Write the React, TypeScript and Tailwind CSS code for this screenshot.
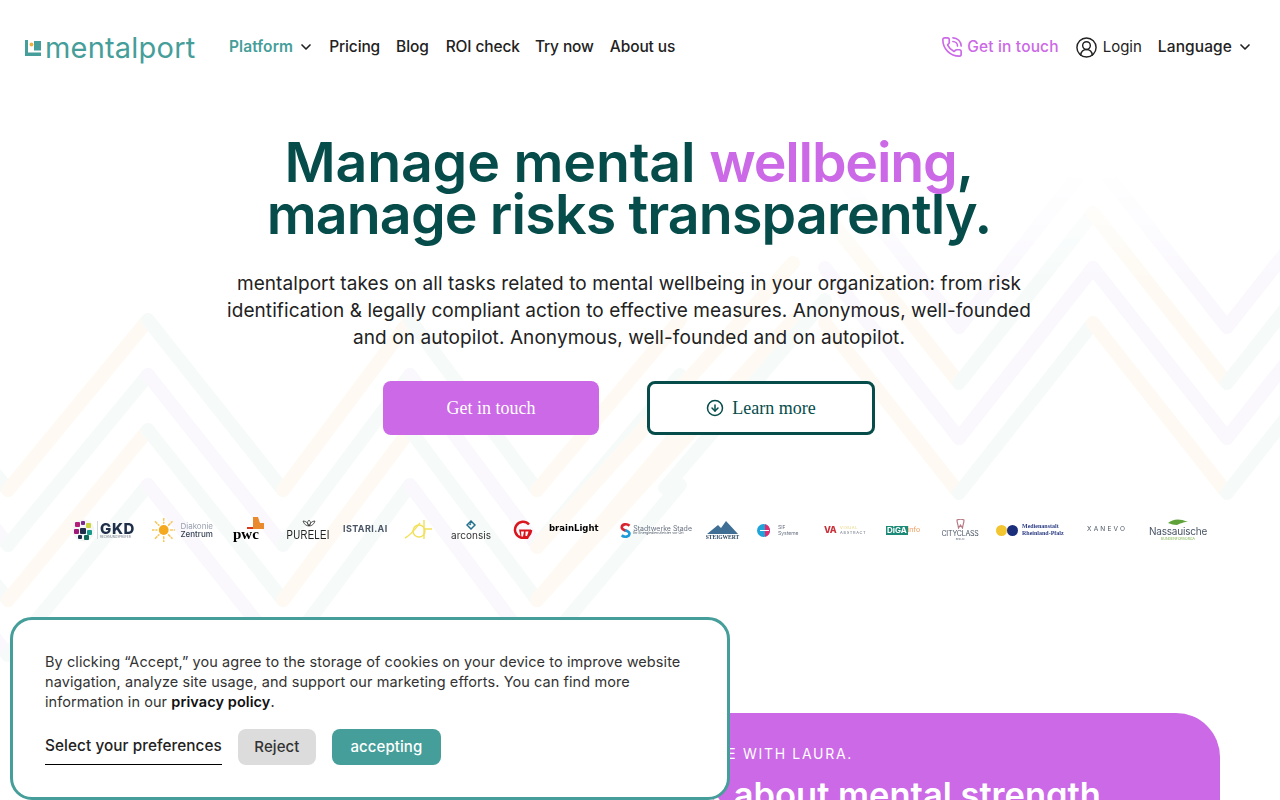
import { ChevronDown, CircleArrowDown, CircleUserRound, PhoneCall } from 'lucide-react'

const orange = '#fefaf3'
const teal = '#f6fbfa'
const purple = '#faf8fd'

// faint zigzag behind the hero: [x1, y1, x2, y2, colour]
const zigzag: [number, number, number, number, string][] = []
const addChevrons = (xs: number[], offsets: number[], left: string[], right: string[]) => {
  offsets.forEach((off, i) => {
    xs.forEach((x, j) => {
      if (j === xs.length - 1) return
      const down = j % 2 === 0
      const next = xs[j + 1]
      zigzag.push([x, down ? off : off + 170, next, down ? off + 170 : off, down ? right[i % right.length] : left[i % left.length]])
    })
  })
}
addChevrons([-126, 8, 148, 283, 410, 537, 680], [320, 375, 430, 485], [orange, teal], [teal, purple])
addChevrons([825, 959, 1093, 1227, 1361], [157, 213, 268, 323], [purple, teal], [purple, orange])
zigzag.push([537, 600, 793, 320, orange], [537, 547, 793, 263, orange], [665, 488, 825, 300, teal])

function Zigzag() {
  return (
    <svg className="absolute inset-0 h-[800px] w-[1280px] [mask-image:linear-gradient(to_bottom,transparent_170px,black_280px)]" viewBox="0 0 1280 800" fill="none">
      {zigzag.map(([x1, y1, x2, y2, c], i) => (
        <line key={i} x1={x1} y1={y1} x2={x2} y2={y2} stroke={c} strokeWidth="14" strokeLinecap="round" />
      ))}
    </svg>
  )
}

function LogoMark() {
  return (
    <svg className="mt-[2px]" width="16" height="16" viewBox="0 0 16 16">
      <path d="M0 0h3v12.5h13V16H0z" fill="#459e99" />
      <rect x="9" y="1" width="7" height="9.5" fill="#459e99" />
      <rect x="4.5" y="1" width="4.5" height="9.5" fill="#ffffff" />
      <circle cx="6.5" cy="4.5" r="1.9" fill="#f0b13c" />
    </svg>
  )
}

function Logos() {
  return (
    <div className="relative mt-[72px] flex h-[46px] items-center pl-[72px] blur-[0.3px]">
      {/* GKD */}
      <div className="flex w-[64px] shrink-0 items-center">
        <svg width="23" height="23" viewBox="0 0 23 23">
          <circle cx="11.5" cy="11.5" r="11" fill="#f4f6f5" />
          <rect x="3" y="3" width="5" height="5" rx="1" fill="#b51e78" />
          <rect x="9" y="2" width="4" height="4" rx="1" fill="#7a2a8c" />
          <rect x="14" y="4" width="5" height="5" rx="1" fill="#c9d63b" />
          <rect x="2" y="10" width="5" height="5" rx="1" fill="#a0197a" />
          <rect x="8" y="9" width="6" height="6" rx="1" fill="#1e2f4a" />
          <rect x="15" y="11" width="5" height="5" rx="1" fill="#169a8a" />
          <rect x="6" y="16" width="4" height="4" rx="1" fill="#1e2f4a" />
          <rect x="12" y="16" width="5" height="5" rx="1" fill="#0e6b58" />
        </svg>
        <div className="ml-[2px] border-l border-gray-300 pl-[2px] leading-none">
          <div className="text-[15px] font-extrabold tracking-[0.6px] text-[#1f2f4a]">GKD</div>
          <div className="text-[3px] text-gray-500">RECHNUNGSPRÜFER</div>
        </div>
      </div>
      {/* Diakonie */}
      <div className="ml-[16px] flex w-[61px] shrink-0 items-center">
        <svg width="24" height="24" viewBox="0 0 24 24">
          <circle cx="12" cy="12" r="5" fill="#f4a91f" />
          <g stroke="#f6c65b" strokeWidth="1.6" strokeLinecap="round" strokeDasharray="2 2">
            <path d="M12 0v5M12 19v5M0 12h5M19 12h5M3.5 3.5l3.5 3.5M17 17l3.5 3.5M3.5 20.5l3.5-3.5M17 7l3.5-3.5" />
          </g>
        </svg>
        <div className="ml-[5px] text-[8px] leading-[8px]">
          <div className="text-gray-400">Diakonie</div>
          <div className="font-medium text-gray-700">Zentrum</div>
        </div>
      </div>
      {/* pwc */}
      <div className="ml-[20px] flex h-[26px] w-[32px] shrink-0 flex-col">
        <svg className="ml-[14px]" width="18" height="14" viewBox="0 0 18 14">
          <path d="M6 0h5l2 6h4v6H6z" fill="#ea8a2e" />
          <rect x="0" y="10" width="6" height="2" fill="#d93a1a" />
        </svg>
        <span className="mt-[-4px] [font-family:'Liberation_Serif',serif] text-[15px] leading-[15px] font-bold text-black">pwc</span>
      </div>
      {/* Purelei */}
      <div className="ml-[24px] flex w-[39px] shrink-0 flex-col items-center">
        <svg width="14" height="8" viewBox="0 0 14 8" fill="none" stroke="#333" strokeWidth="0.8">
          <path d="M7 1c2 2 2 4 0 6-2-2-2-4 0-6zM1 2c3 0 5 2 6 5-3 0-5-2-6-5zM13 2c-3 0-5 2-6 5 3 0 5-2 6-5z" />
        </svg>
        <span className="mt-[2px] [font-family:'Liberation_Sans',sans-serif] text-[12px] leading-[12px] tracking-[0.4px] text-[#222] [transform:scaleX(0.8)]">PURELEI</span>
      </div>
      {/* Istari */}
      <span className="mb-[2px] ml-[15px] w-[46px] shrink-0 text-[9px] font-bold tracking-[0.4px] whitespace-nowrap text-gray-600">ISTARI.AI</span>
      {/* yellow swirl */}
      <svg className="ml-[15px] shrink-0" width="29" height="22" viewBox="0 0 29 22" fill="none" stroke="#f2e05a" strokeWidth="1.4">
        <circle cx="15" cy="12" r="6" />
        <path d="M1 19C7 16 12 9 16 4M20 1v19M21 10h7" />
      </svg>
      {/* arconsis */}
      <div className="ml-[16px] flex w-[44px] shrink-0 flex-col items-center">
        <svg width="10" height="10" viewBox="0 0 10 10" fill="none" stroke="#22708e" strokeWidth="1.5">
          <path d="M5 1l4 4-4 4-4-4zM3.5 5L5 3.5" />
        </svg>
        <span className="text-[10px] leading-[11px] text-[#333]">arconsis</span>
      </div>
      {/* red G */}
      <svg className="ml-[20px] shrink-0" width="20" height="21" viewBox="0 0 20 21">
        <path d="M16 4.500a8 8 0 1 0 2 5.500" fill="none" stroke="#d9161e" strokeWidth="2.500" />
        <path d="M6 9.500h12v3.500l-3 6H8z" fill="#d9161e" />
        <path d="M8 11.500h3l-1 5H8.500zM12.500 11.500h3l-1.500 4.500h-1.500z" fill="#fff" />
      </svg>
      {/* brainLight */}
      <span className="mb-[4px] ml-[16px] w-[55px] shrink-0 [font-family:'DejaVu_Sans',sans-serif] text-[8.5px] font-bold whitespace-nowrap text-black">brainLight</span>
      {/* Stadtwerke */}
      <div className="ml-[16px] flex w-[72px] shrink-0 items-center">
        <svg width="13" height="17" viewBox="0 0 13 17" fill="none" strokeWidth="3">
          <path d="M11 3C8 0 2 1 2 5c0 2 3 3 5 4" stroke="#d9232e" />
          <path d="M2 14c3 3 9 2 9-2 0-2-3-3-5-4" stroke="#1e9ad6" />
        </svg>
        <div className="ml-[2px] leading-none whitespace-nowrap">
          <div className="text-[7px] text-gray-500">Stadtwerke Stade</div>
          <div className="text-[3.5px] text-gray-600">Ihr Energiedienstleister vor Ort</div>
        </div>
      </div>
      {/* Steigwert */}
      <div className="ml-[15px] flex w-[31px] shrink-0 flex-col items-center">
        <svg width="31" height="13" viewBox="0 0 31 13">
          <path d="M0 13L11 4l3 3 5-7 12 13z" fill="#3f6f95" />
        </svg>
        <span className="[font-family:'Liberation_Serif',serif] text-[5.5px] leading-[6px] font-bold text-[#2c4760]">STEIGWERT</span>
      </div>
      {/* SIF */}
      <div className="ml-[19px] flex w-[43px] shrink-0 items-center">
        <svg width="17" height="13" viewBox="0 0 17 13">
          <circle cx="6.500" cy="6.500" r="6.500" fill="#1fa3d8" />
          <path d="M8 0.200A6.500 6.500 0 0 1 8 12.800z" fill="#e6286e" />
          <rect x="3" y="6" width="9" height="1" fill="#fff" />
        </svg>
        <div className="ml-[4px] text-[5px] leading-[6px] text-gray-500">
          <div>SIF</div>
          <div>Systeme</div>
        </div>
      </div>
      {/* Visual Abstract */}
      <div className="ml-[24px] flex w-[46px] shrink-0 items-center">
        <span className="text-[9px] font-extrabold tracking-[-0.5px] text-[#c8323a]">VA</span>
        <div className="ml-[4px] text-[4px] leading-[5px] tracking-[0.6px] whitespace-nowrap">
          <div className="text-[#e6d27a]">VISUAL</div>
          <div className="text-gray-500">ABSTRACT</div>
        </div>
      </div>
      {/* DiGA */}
      <div className="ml-[16px] flex w-[36px] shrink-0 items-center">
        <span className="bg-[#1d8a78] px-[1px] text-[8px] leading-[9px] font-bold text-white">DiGA</span>
        <span className="text-[7px] text-[#ef9a5a]">info</span>
      </div>
      {/* CityClass */}
      <div className="ml-[21px] flex w-[34px] shrink-0 flex-col items-center">
        <svg width="9" height="10" viewBox="0 0 9 10" fill="none" stroke="#b87a86" strokeWidth="1.2">
          <path d="M1 1c2-1 5-1 7 0 0 3-1 4-1.500 8L4.500 6l-2 3C2 5 1 4 1 1z" />
        </svg>
        <span className="text-[7px] leading-[9px] tracking-[-0.2px] whitespace-nowrap text-gray-600">CITYCLASS</span>
        <span className="text-[2.500px] leading-[3px] text-gray-500">BERLIN</span>
      </div>
      {/* Medienanstalt */}
      <div className="ml-[19px] flex w-[70px] shrink-0 items-center">
        <svg width="22" height="11" viewBox="0 0 22 11">
          <circle cx="5.500" cy="5.500" r="5.500" fill="#f3c531" />
          <circle cx="16.500" cy="5.500" r="5.500" fill="#1a2e7c" />
        </svg>
        <div className="ml-[4px] [font-family:'Liberation_Serif',serif] text-[6px] leading-[7px] font-bold whitespace-nowrap text-[#2c3c84]">
          <div>Medienanstalt</div>
          <div>Rheinland-Pfalz</div>
        </div>
      </div>
      {/* Xanevo */}
      <span className="ml-[21px] w-[43px] shrink-0 text-[6.500px] tracking-[2.200px] whitespace-nowrap text-gray-600">XANEVO</span>
      {/* Nassauische */}
      <div className="ml-[20px] flex w-[56px] shrink-0 flex-col items-center">
        <svg width="22" height="8" viewBox="0 0 22 8" fill="none">
          <path d="M1 5c5-4 11-5 20-1-6 0-8 2-11 3-3 0-6-1-9-2z" fill="#5fa23a" />
        </svg>
        <span className="text-[10px] leading-[11px] tracking-[-0.2px] whitespace-nowrap text-gray-600">Nassauische</span>
        <span className="text-[3.500px] leading-[5px] whitespace-nowrap text-[#7ab648]">BUNDENFORSORGA</span>
      </div>
    </div>
  )
}

function CookieBox() {
  return (
    <div className="absolute bottom-0 left-[10px] h-[183px] w-[720px] rounded-[22px] border-[3px] border-[#459e99] bg-white pt-[32px] pl-[32px] text-[14.5px] leading-[20px] tracking-[0.08px] text-[#333]">
      <p className="whitespace-nowrap">
        By clicking “Accept,” you agree to the storage of cookies on your device to improve website
        <br />
        navigation, analyze site usage, and support our marketing efforts. You can find more
        <br />
        information in our <span className="font-semibold text-[#111]">privacy policy</span>.
      </p>
      <div className="mt-[17px] flex items-stretch">
        <button className="border-b border-black pb-[2px] text-[15.3px] font-medium text-[#222]">Select your preferences</button>
        <button className="ml-[16px] h-[36px] w-[78px] rounded-[8px] bg-[#dcdcdc] text-[15px] font-medium text-[#333]">Reject</button>
        <button className="ml-[16px] h-[36px] w-[109px] rounded-[8px] bg-[#459e99] text-[15px] font-medium text-white">accepting</button>
      </div>
    </div>
  )
}

export default function App() {
  return (
    <div className="relative h-[800px] w-[1280px] overflow-hidden bg-white [font-family:Inter,sans-serif]">
      <Zigzag />

      {/* Header */}
      <header className="relative flex h-[92px] items-center justify-between pt-[2px] pr-[27px] pl-[25px]">
        <div className="flex items-center">
          <div className="flex w-[204px] items-center">
            <LogoMark />
            <span className="ml-[4px] text-[29px] leading-none tracking-[0.2px] text-[#459e99]">mentalport</span>
          </div>
          <nav className="flex items-center text-[15.5px] font-medium tracking-[-0.12px] text-[#222]">
            <a className="flex items-center font-semibold tracking-[0.1px] text-[#459e99]">
              Platform
              <ChevronDown className="ml-[5px] text-[#222]" size={16} strokeWidth={2.5} />
            </a>
            <a className="ml-[15px]">Pricing</a>
            <a className="ml-[16px]">Blog</a>
            <a className="ml-[17px]">ROI check</a>
            <a className="ml-[15px]">Try now</a>
            <a className="ml-[16px]">About us</a>
          </nav>
        </div>
        <div className="flex items-center text-[15px]">
          <a className="flex items-center text-[15.5px] font-medium tracking-[0.15px] text-[#cb69e6]">
            <PhoneCall size={22} strokeWidth={1.8} />
            <span className="ml-[4px]">Get in touch</span>
          </a>
          <a className="ml-[16px] flex items-center text-[#222]">
            <CircleUserRound size={23} strokeWidth={1.5} />
            <span className="ml-[5px]">Login</span>
          </a>
          <a className="ml-[16px] flex items-center text-[15.5px] font-medium tracking-[0.1px] text-[#222]">
            Language
            <ChevronDown className="ml-[5px]" size={16} strokeWidth={2.5} />
          </a>
        </div>
      </header>

      {/* Hero */}
      <section className="relative flex flex-col items-center pr-[22px]">
        <h1 className="mt-[44px] text-center text-[55.5px] leading-[52px] font-semibold tracking-[-0.85px] whitespace-nowrap text-[#054c4a]">
          <span className="tracking-[-0.2px]">Manage mental </span>
          <span className="tracking-[-1.2px] text-[#cb69e6]">wellbeing</span>,
          <br />
          manage risks transparently.
        </h1>
        <p className="mt-[30px] text-center text-[19px] leading-[27px] tracking-[0.08px] whitespace-nowrap text-[#222]">
          mentalport takes on all tasks related to mental wellbeing in your organization: from risk
          <br />
          identification &amp; legally compliant action to effective measures. Anonymous, well-founded
          <br />
          and on autopilot. Anonymous, well-founded and on autopilot.
        </p>
        <div className="mt-[30px] flex gap-[48px] [font-family:'Liberation_Serif',serif] text-[18px]">
          <button className="h-[54px] w-[216px] rounded-[8px] bg-[#cb69e6] text-white">Get in touch</button>
          <button className="flex h-[54px] w-[228px] items-center justify-center rounded-[8px] border-[3px] border-[#054c4a] bg-white text-[#054c4a]">
            <CircleArrowDown size={18} strokeWidth={2} />
            <span className="ml-[8px]">Learn more</span>
          </button>
        </div>
      </section>

      <Logos />

      {/* Purple card, mostly below the fold */}
      <section className="relative mt-[160px] ml-[60px] h-[300px] w-[1160px] rounded-[44px] bg-[#cb69e6] pt-[31px] text-white">
        <div className="w-[793px] text-right text-[14px] leading-[20px] tracking-[1.7px]">EXCHANGE WITH LAURA.</div>
        <div className="mt-[9px] w-[1041px] text-right text-[34.5px] leading-[44px] font-semibold whitespace-nowrap">Talk about mental strength</div>
      </section>

      <CookieBox />
    </div>
  )
}
